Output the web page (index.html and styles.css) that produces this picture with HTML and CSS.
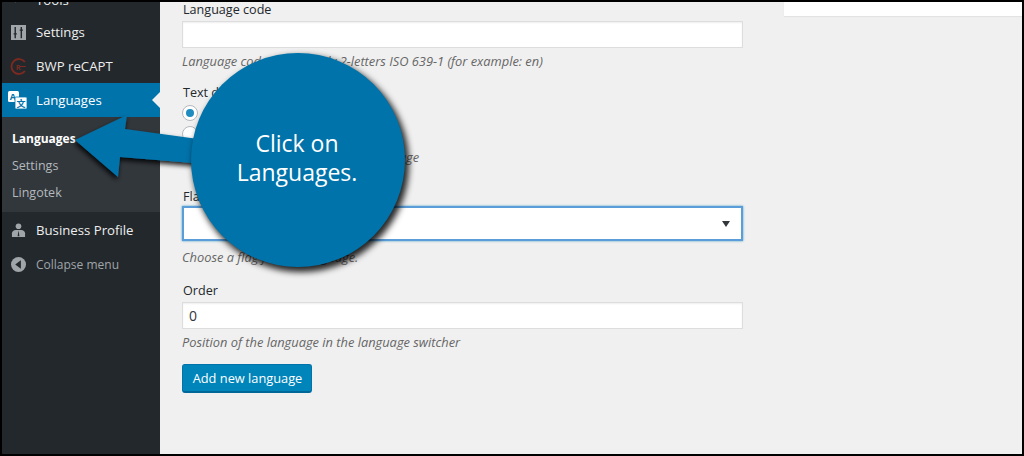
FILE: index.html
```html
<!DOCTYPE html>
<html lang="en">
<head>
<meta charset="utf-8">
<title>Languages</title>
<link rel="stylesheet" href="styles.css">
</head>
<body>
<div class="frame">
  <aside class="sidebar">
    <ul class="menu">
      <li class="item item-cut">
        <svg class="icon" viewBox="0 0 16 16"><path d="M3 2l3 3-3 3 2 2 5-5-3-3z" fill="#a0a5aa"/></svg>
        <span class="label">Tools</span>
      </li>
      <li class="item">
        <svg class="icon" viewBox="0 0 16 16"><rect width="16" height="16" fill="#a0a5aa"/><path d="M4.500 2v12M2.800 9.500h3.400M11 2v12M9.300 5.500h3.400" stroke="#23282d" stroke-width="1.500" fill="none"/></svg>
        <span class="label">Settings</span>
      </li>
      <li class="item item-bwp">
        <svg class="icon" viewBox="0 0 16 16"><path d="M14 3.800A7 7 0 1 0 14 12.200" fill="none" stroke="#7a2a20" stroke-width="1.800"/><path d="M9 8h6" stroke="#7a2a20" stroke-width="1"/><text x="5.500" y="11" class="icon-r">R</text></svg>
        <span class="label">BWP reCAPT</span>
      </li>
      <li class="item item-current">
        <svg class="icon icon-lang" viewBox="0 0 20 18"><rect x="0" y="0" width="11" height="11" rx="1.500" fill="#fff"/><text x="1.800" y="9" class="icon-a">A</text><rect x="7" y="6" width="12" height="12" rx="1" fill="#fff" stroke="#0073aa" stroke-width=".8"/><text x="8.500" y="16" class="icon-zh">文</text></svg>
        <span class="label">Languages</span>
        <span class="caret"></span>
      </li>
      <li class="submenu">
        <a class="sub sub-on">Languages</a>
        <a class="sub">Settings</a>
        <a class="sub">Lingotek</a>
      </li>
      <li class="item item-business">
        <svg class="icon" viewBox="0 0 16 16"><circle cx="8" cy="3.500" r="3" fill="#a0a5aa"/><path d="M1 15v-4c0-2 2-3.500 4-3.500h6c2 0 4 1.500 4 3.500v4z" fill="#a0a5aa"/><path d="M8 8l-1 6h2z" fill="#23282d"/></svg>
        <span class="label">Business Profile</span>
      </li>
      <li class="item item-collapse">
        <svg class="icon" viewBox="0 0 16 16"><circle cx="8" cy="8" r="8" fill="#a0a5aa"/><path d="M10.500 3.500v9L4.500 8z" fill="#23282d"/></svg>
        <span class="label">Collapse menu</span>
      </li>
    </ul>
  </aside>
  <main class="content">
    <form class="form">
      <div class="field">
        <label class="field-label">Language code</label>
        <div class="input"></div>
        <p class="hint">Language code - preferably 2-letters ISO 639-1 (for example: en)</p>
      </div>
      <div class="field field-dir">
        <label class="field-label">Text direction</label>
        <div class="radio-row"><span class="radio radio-on"></span><span class="radio-text">left to right</span></div>
        <div class="radio-row"><span class="radio"></span><span class="radio-text">right to left</span></div>
        <p class="hint">Choose the text direction for the language</p>
      </div>
      <div class="field field-flag">
        <label class="field-label">Flag</label>
        <div class="select"><span class="select-arrow"></span></div>
        <p class="hint hint-flag">Choose a flag for the language.</p>
      </div>
      <div class="field field-order">
        <label class="field-label">Order</label>
        <div class="input input-value">0</div>
        <p class="hint">Position of the language in the language switcher</p>
      </div>
      <button class="button" type="button">Add new language</button>
    </form>
    <div class="side-box"></div>
  </main>
  <svg class="arrow" viewBox="0 0 1020 452" aria-hidden="true">
    <defs>
      <filter id="arrow-shadow" x="-20%" y="-30%" width="140%" height="170%">
        <feDropShadow dx="-1" dy="3" stdDeviation="2.500" flood-color="#000" flood-opacity=".9"/>
      </filter>
    </defs>
    <polygon points="73,138 125,113 123,127 240,143 240,165 118,155 116,175" fill="#0073aa" filter="url(#arrow-shadow)"/>
  </svg>
  <div class="callout">Click on<br>Languages.</div>
</div>
</body>
</html>
```
FILE: styles.css
```css
* { box-sizing: border-box; }
html, body { margin: 0; padding: 0; height: 100%; background: #000; }
.frame {
  position: relative;
  display: flex;
  width: 1024px;
  height: 456px;
  border: 2px solid #000;
  overflow: hidden;
  background: #f0f0f0;
  font-family: "Open Sans", "Noto Sans", sans-serif;
  font-size: 13px;
  color: #32373c;
}
.sidebar { flex: 0 0 158px; background: #23282d; }
.menu { list-style: none; margin: -21px 0 0; padding: 0; }
.item {
  display: flex;
  align-items: center;
  height: 34px;
  padding-left: 9px;
  color: #eee;
  font-size: 13.2px;
  position: relative;
}
.item-cut { padding-top: 4px; }
.icon { width: 15px; height: 15px; flex: none; margin-right: 10px; }
.item-bwp .icon { width: 17px; height: 17px; margin-left: -1px; margin-right: 9px; }
.icon-lang { width: 20px; height: 18px; margin-left: -3px; margin-right: 8px; }
.icon-r { font: 700 7px "Open Sans", sans-serif; fill: #7a2a20; }
.icon-a { font: 700 9px "Open Sans", sans-serif; fill: #0073aa; }
.icon-zh { font: 700 9px "Noto Sans CJK SC", sans-serif; fill: #0073aa; }
.item-current { background: #0073aa; color: #fff; }
.caret {
  position: absolute;
  right: 0;
  top: 9px;
  border: 8px solid transparent;
  border-right-color: #f0f0f0;
  border-left-width: 0;
}
.submenu { background: #32373c; padding: 8px 0 6px; display: flex; flex-direction: column; }
.sub { display: block; height: 27px; line-height: 27px; padding-left: 10px; font-size: 12.500px; color: #b4b9be; }
.sub-on { color: #fff; font-weight: 700; font-size: 12px; }
.item-business { margin-top: 1px; }
.item-collapse { color: #a0a5aa; font-size: 12px; }
.content { flex: 1; position: relative; display: flex; justify-content: space-between; align-items: flex-start; padding-left: 22px; }
.form { width: 561px; margin-top: -3px; }
.field-label { display: block; padding: 1px 0 0 1px; margin-bottom: -1px; line-height: 20px; color: #23282d; font-size: 12.600px; }
.input {
  height: 27px;
  margin-top: 2px;
  border: 1px solid #ddd;
  background: #fff;
  box-shadow: inset 0 1px 2px rgba(0,0,0,.07);
  padding-left: 6px;
  line-height: 25px;
  font-size: 14px;
}
.hint { margin: 3px 0 0; line-height: 20px; font-size: 12.850px; font-style: italic; color: #666; }
.hint-flag { margin-top: 6px; }
.field-dir { margin-top: 11px; }
.radio-row { display: flex; align-items: center; height: 21px; }
.radio {
  width: 16px;
  height: 16px;
  border: 1px solid #b4b9be;
  border-radius: 50%;
  background: #fff;
  margin-right: 8px;
  position: relative;
}
.radio-on::after {
  content: "";
  position: absolute;
  left: 3px;
  top: 3px;
  width: 8px;
  height: 8px;
  border-radius: 50%;
  background: #1e8cbe;
}
.field-flag { margin-top: 19px; }
.select {
  position: relative;
  height: 35px;
  border: 2px solid #5b9dd9;
  background: #fff;
  box-shadow: 0 0 2px rgba(30,140,190,.8);
}
.select-arrow {
  position: absolute;
  right: 11px;
  top: 13px;
  border-style: solid;
  border-width: 6px 4px 0;
  border-color: #32373c transparent transparent;
}
.field-order { margin-top: 13px; }
.button {
  display: block;
  margin-top: 12px;
  width: 130px;
  height: 29px;
  padding: 0 0 0 1px;
  border: 1px solid #0073aa;
  border-bottom-width: 2px;
  border-bottom-color: #006799;
  border-radius: 3px;
  background: #0085ba;
  color: #fff;
  font: 12.800px "Open Sans", sans-serif;
}
.side-box {
  width: 238px;
  height: 14px;
  background: #fff;
  box-shadow: 0 1px 1px rgba(0,0,0,.05);
}
.arrow { position: absolute; left: 0; top: 0; width: 1020px; height: 452px; pointer-events: none; }
.callout {
  position: absolute;
  left: 189px;
  top: 51px;
  width: 214px;
  height: 214px;
  padding: 0 2px 5px 0;
  border-radius: 50%;
  background: #0073aa;
  box-shadow: 3px 4px 6px 1px rgba(0,0,0,.85);
  color: #fff;
  display: flex;
  align-items: center;
  justify-content: center;
  text-align: center;
  font-size: 23px;
  line-height: 29px;
}
```
